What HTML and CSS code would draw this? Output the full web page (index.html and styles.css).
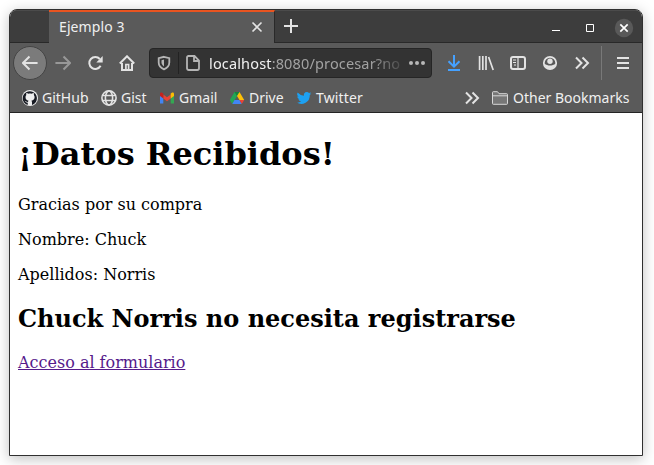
FILE: index.html
```html
<!DOCTYPE html>
<html lang="es">
<head>
<meta charset="utf-8">
<title>Ejemplo 3</title>
<link rel="stylesheet" href="styles.css">
</head>
<body>
<div class="window">
  <header class="titlebar">
    <div class="tab"><span class="tab-title">Ejemplo 3</span>
      <svg class="tab-close" width="16" height="16" viewBox="0 0 16 16"><path d="M3.500 3.500l9 9m0-9l-9 9"/></svg>
    </div>
    <svg class="new-tab" width="16" height="16" viewBox="0 0 16 16"><path d="M8 1v14M1 8h14"/></svg>
    <div class="controls">
      <svg width="34" height="20" viewBox="0 0 34 20"><path d="M13 12.500h8"/></svg>
      <svg width="34" height="20" viewBox="0 0 34 20"><path d="M13.500 6.500h7v7h-7z"/></svg>
      <svg width="34" height="20" viewBox="0 0 34 20"><circle cx="17" cy="10" r="9.200" fill="#595959" stroke="none"/><path d="M13.300 6.300l7.400 7.400m0-7.400l-7.400 7.400" stroke-width="1.700"/></svg>
    </div>
  </header>
  <nav class="toolbar">
    <span class="back"><svg width="16" height="16" viewBox="0 0 16 16"><path d="M15.600 8H1.200M7.500 1.500L1 8l6.500 6.500"/></svg></span>
    <span class="tool forward"><svg width="16" height="16" viewBox="0 0 16 16"><path d="M.4 8h14.400M8.500 1.500L15 8l-6.500 6.500"/></svg></span>
    <span class="tool"><svg width="16" height="16" viewBox="0 0 16 16"><path d="M13.600 10.800A6 6 0 1 1 12.800 4"/><path d="M15.700 1v6.400H9.300z" fill="#e3e3e3" stroke="none"/></svg></span>
    <span class="tool"><svg width="16" height="16" viewBox="0 0 16 16"><path d="M.8 8.500L8 1.300l7.200 7.200M3 8v7h10V8"/><path d="M6.900 15V9.500h2.700V15" stroke-width="1.700"/></svg></span>
    <div class="urlbar">
      <svg class="shield" width="16" height="16" viewBox="0 0 16 16"><path d="M8 1.800l5.300 1.300v4.500c0 3-2.200 5.500-5.300 6.700-3.100-1.200-5.300-3.700-5.300-6.700V3.100z"/><path d="M8 4.600v6.800C6.300 10.200 5.500 9 5.500 7.500V5.200z" fill="#b5b5b5" stroke="none"/></svg>
      <i class="url-divider"></i>
      <svg class="page-icon" width="16" height="16" viewBox="0 0 16 16"><path d="M3.500 1h6l4.500 4.500v7.800a1.700 1.700 0 0 1-1.700 1.700H3.700A1.700 1.700 0 0 1 2 13.300V2.500A1.500 1.500 0 0 1 3.500 1zM9 1v5h5"/></svg>
      <span class="url">localhost<span class="path">:8080/procesar?no</span></span>
      <svg class="dots" width="18" height="6" viewBox="0 0 18 6"><circle cx="3" cy="3" r="2"/><circle cx="9" cy="3" r="2"/><circle cx="15" cy="3" r="2"/></svg>
    </div>
    <span class="tool download"><svg width="16" height="16" viewBox="0 0 16 16"><path d="M8 0v11M2.500 6.200L8 11.700l5.500-5.500M2 15h12"/></svg></span>
    <span class="tool"><svg width="16" height="16" viewBox="0 0 16 16"><path d="M1.600 1v14M4.800 1v14M8 1v14M10.600 2l4.600 13" stroke-width="1.700"/></svg></span>
    <span class="tool"><svg width="16" height="16" viewBox="0 0 16 16"><rect x="1" y="2" width="14" height="12" rx="2"/><path d="M8 2v12M3 5h3M3 7.500h3M4 10h2" stroke-width="1.200"/></svg></span>
    <span class="tool"><svg width="16" height="16" viewBox="0 0 16 16"><circle cx="8" cy="8" r="6.200" stroke-width="1.800"/><circle cx="8" cy="6.200" r="2.700" fill="#e3e3e3" stroke="none"/><path d="M2.500 8.800C4 10 6 10.600 8 10.600s4-.6 5.500-1.800c-.3 3-2.500 5.500-5.500 5.500s-5.200-2.500-5.500-5.500z" fill="#e3e3e3" stroke="none"/></svg></span>
    <span class="tool"><svg width="16" height="16" viewBox="0 0 16 16"><path d="M2 2.500L7.500 8 2 13.500M8.500 2.500L14 8l-5.500 5.500"/></svg></span>
    <i class="tool-divider"></i>
    <span class="tool menu"><svg width="16" height="16" viewBox="0 0 16 16"><path d="M2 3h12M2 8h12M2 13h12"/></svg></span>
  </nav>
  <div class="bookmarks">
    <span class="bookmark github"><svg width="16" height="16" viewBox="0 0 16 16"><circle cx="8" cy="8" r="8" fill="#eee"/><path d="M5.600 15c.2-1 .1-1.700.3-2.300-2.400 0-2.300-1.300-3.300-1.900.9-.3 1.300.8 2 1 .5.200 1 .1 1.400-.1.100-.5.300-.8.600-1C4.600 10.400 3.500 9.300 3.500 7c0-.8.300-1.500.8-2.100-.2-.6-.2-1.300.1-2 .7 0 1.400.3 2 .8 1.100-.3 2.200-.3 3.300 0 .6-.5 1.300-.8 2-.8.300.7.300 1.400.1 2 .5.600.8 1.300.8 2.100 0 2.300-1.200 3.400-3.200 3.700.4.400.6.900.6 1.500V15A7.100 7.100 0 1 0 5.600 15z" fill="#181b23"/></svg><b>GitHub</b></span>
    <span class="bookmark gist"><svg class="outline" width="16" height="16" viewBox="0 0 16 16"><g stroke-width="1.600"><circle cx="8" cy="8" r="7.100"/><ellipse cx="8" cy="8" rx="3.600" ry="7"/><path d="M1.500 5.500h13M1.500 10.500h13" stroke-width="1.400"/></g></svg><b>Gist</b></span>
    <span class="bookmark gmail"><svg width="16" height="16" viewBox="0 0 16 16"><path d="M1 4v9.500h3.300V7z" fill="#4285f4"/><path d="M15 4v9.500h-3.300V7z" fill="#34a853"/><path d="M4.300 4.500L8 7.300l3.700-2.800v4L8 11.300 4.300 8.500z" fill="#ea4335"/><path d="M1 4c0-1.600 1.500-1.900 2.500-1.100l.8.600v5L1 6z" fill="#c5221f"/><path d="M15 4c0-1.600-1.500-1.900-2.500-1.100l-.8.600v5L15 6z" fill="#fbbc04"/></svg><b>Gmail</b></span>
    <span class="bookmark drive"><svg width="16" height="16" viewBox="0 0 16 16"><path d="M5.500 2h5L3.300 14 .8 10z" fill="#23a455"/><path d="M5.500 2h5l-2.500 4z" fill="#16833c"/><path d="M10.500 2l4.700 8h-4.700L8 6z" fill="#ffc107"/><path d="M5.500 10h5l2.300 4H3.300z" fill="#4285f4"/><path d="M10.500 10h4.700l-2.400 4z" fill="#ea4335"/></svg><b>Drive</b></span>
    <span class="bookmark twitter"><svg width="16" height="16" viewBox="0 0 24 24"><path fill="#1da1f2" d="M23 5.200a9 9 0 0 1-2.600.7 4.500 4.500 0 0 0 2-2.500 9 9 0 0 1-2.900 1.100 4.500 4.500 0 0 0-7.700 4.100A12.800 12.800 0 0 1 2.500 3.900a4.500 4.500 0 0 0 1.400 6 4.500 4.500 0 0 1-2-.6c0 2.200 1.500 4.100 3.600 4.500a4.500 4.500 0 0 1-2 .1 4.500 4.500 0 0 0 4.200 3.100A9 9 0 0 1 1 18.900 12.800 12.800 0 0 0 20.700 7.500 9 9 0 0 0 23 5.200z"/></svg><b>Twitter</b></span>
    <span class="bookmark overflow"><svg class="outline" width="16" height="16" viewBox="0 0 16 16"><path d="M2 2.500L7.500 8 2 13.500M8.500 2.500L14 8l-5.500 5.500"/></svg></span>
    <span class="bookmark other"><svg width="16" height="16" viewBox="0 0 16 16"><path d="M.5 13.500v-11A.8.8 0 0 1 1.300 1.700h4.200l1.500 2h7.700a.8.800 0 0 1 .8.800v9a.8.800 0 0 1-.8.800H1.300a.8.800 0 0 1-.8-.8zM.5 5.800h15" fill="#777" stroke="#d8d8d8"/></svg><b>Other Bookmarks</b></span>
  </div>
  <main class="page">
    <h1>¡Datos Recibidos!</h1>
    <p>Gracias por su compra</p>
    <p>Nombre: Chuck</p>
    <p>Apellidos: Norris</p>
    <h2>Chuck Norris no necesita registrarse</h2>
    <a href="#">Acceso al formulario</a>
  </main>
</div>
</body>
</html>
```
FILE: styles.css
```css
* { box-sizing: border-box; }
body { margin: 0; padding: 9px; height: 465px; overflow: hidden; background: #fff; }
svg { display: block; flex: none; }
.window {
  width: 634px; height: 447px; overflow: hidden;
  display: flex; flex-direction: column;
  border: 1px solid #303030; border-radius: 8px 8px 0 0;
  background: #fff;
  box-shadow: 0 3px 14px rgba(0,0,0,.25);
  font-family: "Noto Sans", sans-serif; font-size: 14px; color: #f0f0f0;
}
.titlebar {
  height: 33px; flex: none; display: flex; align-items: center;
  padding-left: 39px; background: #3d3d3d;
  box-shadow: inset 0 1px #4b4b4b, inset 0 -1px #292929;
}
.tab {
  width: 226px; height: 33px; padding: 0 9px 0 10px; display: flex; align-items: center; justify-content: space-between;
  background: #5a5a5a; border-top: 2px solid #e95420; border-right: 1px solid #292929;
}
.tab-title { margin-top: -2px; line-height: 20px; font-size: 14px; letter-spacing: .1px; }
.tab-close, .new-tab, .controls svg, .tool svg, .back svg, .outline { fill: none; stroke: #e3e3e3; stroke-width: 2; }
.tab-close { margin-top: -1px; stroke-width: 1.6; }
.new-tab { margin: -1px 0 0 8px; }
.controls { margin: 2px 1px 0 auto; display: flex; }
.controls svg { stroke: #fff; stroke-width: 1; }
.toolbar { height: 40px; flex: none; display: flex; align-items: center; padding-left: 3px; background: #5a5a5a; }
.back {
  width: 34px; height: 34px; display: grid; place-items: center;
  border: 1px solid #444; border-radius: 50%; background: #7b7b7b;
}
.tool { width: 32px; height: 32px; display: grid; place-items: center; }
.forward { opacity: .45; }
.download svg { stroke: #45a1ff; }
.urlbar {
  width: 283px; height: 30px; margin: 0 6px; padding-left: 6px;
  display: flex; align-items: center;
  border: 1px solid #252525; border-radius: 4px; background: #333;
}
.shield, .page-icon { fill: none; stroke: #b5b5b5; stroke-width: 1.8; }
.url-divider { width: 1px; height: 22px; margin: 0 6px; background: #222; }
.url {
  width: 194px; margin: -1px 0 0 8px; overflow: hidden; white-space: nowrap; font-size: 14.500px; line-height: 22px; letter-spacing: .15px;
  -webkit-mask-image: linear-gradient(90deg, #000 83%, transparent 103%);
  mask-image: linear-gradient(90deg, #000 83%, transparent 103%);
}
.path { color: #a2a2a2; }
.dots { margin-left: 5px; fill: #b8b8b8; }
.tool-divider { width: 1px; height: 34px; margin: 0 5px 0 3px; background: #797979; }
.bookmarks {
  height: 30px; flex: none; display: flex; align-items: center; padding-left: 12px;
  background: #5a5a5a; border-bottom: 1px solid #242424;
}
.bookmark { display: flex; align-items: center; gap: 4px; white-space: nowrap; }
.bookmark b { font-weight: 400; line-height: 20px; }
.github { width: 79px; }
.gist { width: 58px; }
.gmail { width: 70px; }
.drive { width: 67px; }
.twitter { letter-spacing: .15px; }
.overflow { margin-left: auto; margin-right: 12px; }
.other { width: 150px; gap: 5px; }
.page { flex: 1; padding: 0 8px; color: #000; font: 16px/19px "DejaVu Serif", serif; }
.page h1 { margin: 22px 0; font-size: 32px; line-height: 38px; }
.page p { margin: 16px 0; }
.page h2 { margin: 21px 0 20px; font-size: 24px; line-height: 28px; }
.page a { color: #551a8b; }
```
